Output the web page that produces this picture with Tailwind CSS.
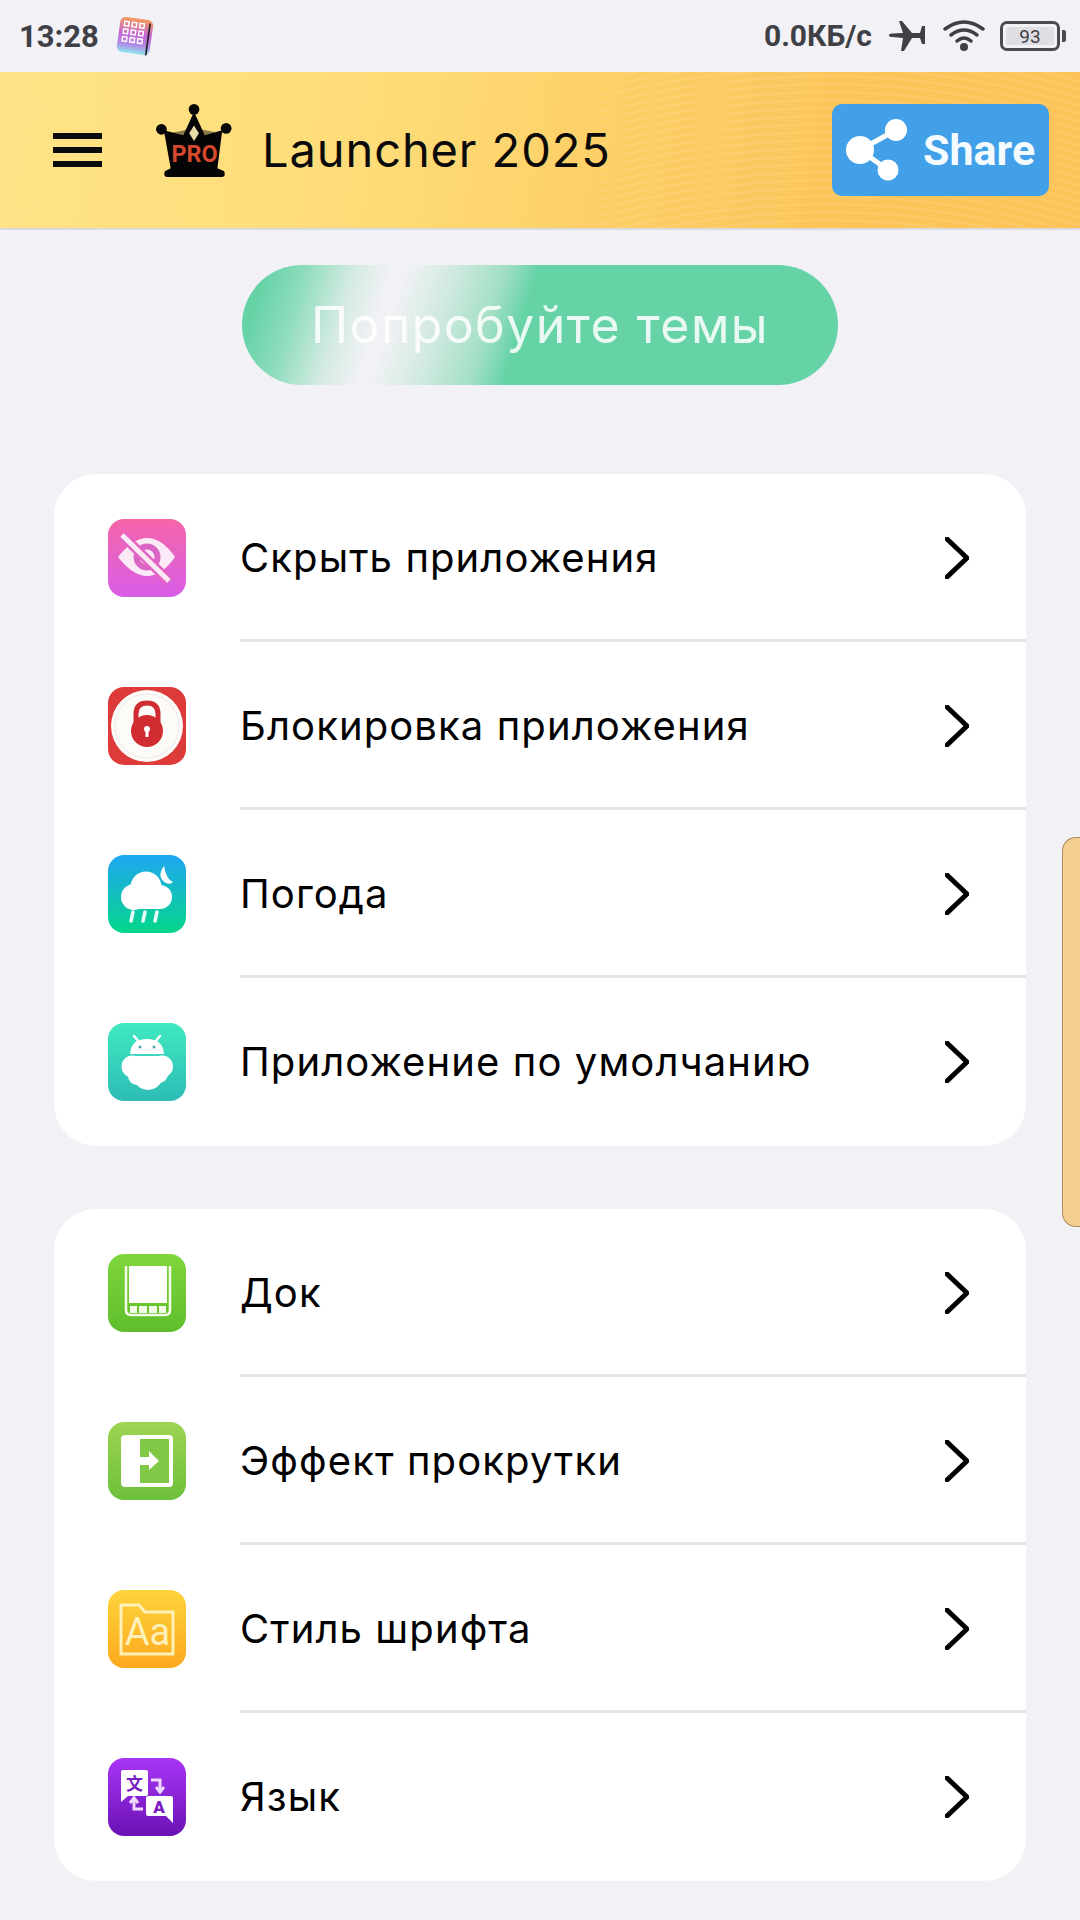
<!DOCTYPE html>
<html lang="ru">
<head>
    <meta charset="UTF-8">
    <meta name="viewport" content="width=device-width, initial-scale=1.0">
    <title>Launcher 2025</title>
    <script src="https://cdn.jsdelivr.net/npm/@tailwindcss/browser@4"></script>
</head>
<body class="relative w-[1080px] h-[1920px] overflow-hidden bg-[#f1f1f6] font-['Roboto',sans-serif]">
    <svg width="0" height="0" class="absolute">
        <defs>
            <symbol id="chevron" viewBox="0 0 24 42"><path d="M2 2 L22 21 L2 40" fill="none" stroke="#000" stroke-width="5" stroke-linecap="round" stroke-linejoin="round"/></symbol>
            <linearGradient id="gPink" x1="0" y1="0" x2="0" y2="1"><stop offset="0" stop-color="#f565a8"/><stop offset="1" stop-color="#d85ee8"/></linearGradient>
            <linearGradient id="gWeather" x1="0" y1="0" x2="0" y2="1"><stop offset="0" stop-color="#20a6f2"/><stop offset="1" stop-color="#04d78a"/></linearGradient>
            <linearGradient id="gAndroid" x1="0" y1="0" x2="0" y2="1"><stop offset="0" stop-color="#40e9c0"/><stop offset="1" stop-color="#2dbcb6"/></linearGradient>
            <linearGradient id="gDock" x1="0" y1="0" x2="0" y2="1"><stop offset="0" stop-color="#80d63c"/><stop offset="1" stop-color="#5fbd2c"/></linearGradient>
            <linearGradient id="gScroll" x1="0" y1="0" x2="0" y2="1"><stop offset="0" stop-color="#9ed452"/><stop offset="1" stop-color="#6cc03a"/></linearGradient>
            <linearGradient id="gFont" x1="0" y1="0" x2="0" y2="1"><stop offset="0" stop-color="#fdd43c"/><stop offset="1" stop-color="#fda81e"/></linearGradient>
            <linearGradient id="gLang" x1="0" y1="0" x2="0" y2="1"><stop offset="0" stop-color="#a935f6"/><stop offset="1" stop-color="#6a12b4"/></linearGradient>
            <linearGradient id="gNotif" x1="0" y1="0" x2="0" y2="1"><stop offset="0" stop-color="#f59a5a"/><stop offset="0.45" stop-color="#c566d8"/><stop offset="0.75" stop-color="#b08ae6"/><stop offset="1" stop-color="#8ee8ee"/></linearGradient>
            <pattern id="hatch" width="7" height="7" patternUnits="userSpaceOnUse" patternTransform="rotate(45)"><path d="M0 0 L0 7" stroke="#fff" stroke-opacity="0.16" stroke-width="1.500"/></pattern>
            <linearGradient id="hatchFade" x1="0" y1="0" x2="1" y2="0"><stop offset="0" stop-color="#fff"/><stop offset="1" stop-color="#000"/></linearGradient>
            <mask id="hatchMask"><rect width="300" height="156" fill="url(#hatchFade)"/></mask>
        </defs>
    </svg>

    <!-- Status bar -->
    <div class="h-[72px] flex items-center justify-between pl-[19px] pr-[14px] text-[#3f4045]">
        <div class="flex items-center gap-[16px]">
            <span class="text-[31px] font-bold leading-none">13:28</span>
            <svg width="40" height="42" viewBox="0 0 36 38">
                <g transform="rotate(8 18 19)">
                    <rect x="3" y="3" width="30" height="32" rx="5" fill="url(#gNotif)"/>
                    <g fill="none" stroke="#fff" stroke-width="1.3">
                        <rect x="7" y="7" width="4" height="4"/><rect x="14" y="7" width="4" height="4"/><rect x="21" y="7" width="4" height="4"/>
                        <rect x="7" y="14" width="4" height="4"/><rect x="14" y="14" width="4" height="4"/><rect x="21" y="14" width="4" height="4"/>
                        <rect x="7" y="21" width="4" height="4"/><rect x="14" y="21" width="4" height="4"/><rect x="21" y="21" width="4" height="4"/>
                    </g>
                    <path d="M30 6 L30 35" stroke="#222" stroke-width="1.5"/>
                </g>
            </svg>
        </div>
        <div class="flex items-center">
            <span class="text-[30px] font-bold leading-none">0.0КБ/с</span>
            <svg class="ml-[17px]" width="36" height="32" viewBox="0 0 36 32">
                <path d="M0 15 Q0 13.500 3 13.500 L14 13 L10 1 L13 1 L23 13 L31 13 L33 6 L36 6 L36 24 L33 24 L31 18 L23 18 L15 31 L12 31 L14 18 L3 17 Q0 17 0 15 Z" fill="#3f4045"/>
            </svg>
            <svg class="ml-[18px]" width="42" height="32" viewBox="0 0 42 32">
                <g fill="none" stroke="#3f4045" stroke-width="3.500" stroke-linecap="round">
                    <path d="M2 9 Q21 -5 40 9"/>
                    <path d="M8 15 Q21 5 34 15"/>
                    <path d="M14 21 Q21 15 28 21"/>
                </g>
                <circle cx="21" cy="27" r="4" fill="#3f4045"/>
            </svg>
            <div class="ml-[15px] w-[60px] h-[30px] border-[3px] border-[#4a4b50] rounded-[7px] p-[3px] flex">
                <div class="flex-1 bg-[#dfdfe3] rounded-[2px] flex items-center justify-center text-[19px] leading-none text-[#3f4045]">93</div>
            </div>
            <div class="ml-[2px] w-[4px] h-[12px] bg-[#4a4b50] rounded-r-[2px]"></div>
        </div>
    </div>

    <!-- Header -->
    <header class="relative h-[158px] border-b-[2px] border-[#dcdce0] overflow-hidden flex items-center justify-between pl-[53px] pr-[31px] bg-[linear-gradient(100deg,#ffe386_0%,#fedc78_35%,#fdd068_55%,#fcc65c_75%,#fcc358_100%)]">
        <svg id="waves" class="absolute inset-0" width="1080" height="156" viewBox="0 0 1080 156" fill="none" stroke="#fff" stroke-opacity="0.14" stroke-width="1.200">
            <rect width="300" height="156" fill="url(#hatch)" stroke="none" mask="url(#hatchMask)"/>
        </svg>
        <div class="relative flex items-center">
            <div class="w-[49px] flex flex-col gap-[8px]">
                <div class="h-[6px] bg-[#0b0b0b]"></div>
                <div class="h-[6px] bg-[#0b0b0b]"></div>
                <div class="h-[6px] bg-[#0b0b0b]"></div>
            </div>
            <svg class="ml-[53px] mt-[-18px]" width="80" height="74" viewBox="0 0 80 76">
                <path d="M14 30 L34 26 L30 36 Z M66 30 L46 26 L50 36 Z" fill="#8b7a48"/>
                <circle cx="39" cy="5.500" r="5.500" fill="#050505"/>
                <circle cx="5.500" cy="26" r="5.500" fill="#050505"/>
                <circle cx="72" cy="25" r="5.500" fill="#050505"/>
                <path d="M39 8 L50 32 L68 27 L63 66 L70 69 Q72 75 67 75 L12 75 Q7 75 9 69 L15 66 L8 27 L28 32 Z" fill="#050505"/>
                <path d="M39 22 L44 30 L39 38 L34 30 Z" fill="#e8dca8"/>
                <text x="39.500" y="60" text-anchor="middle" font-family="Roboto, sans-serif" font-weight="700" font-size="24" fill="#d4492e">PRO</text>
            </svg>
            <span class="ml-[27px] mt-[-2px] text-[47px] leading-none text-[#0a0a0a] tracking-[0.9px] font-['Inter',sans-serif]">Launcher 2025</span>
        </div>
        <div class="relative w-[217px] h-[92px] rounded-[10px] bg-[#42a0e8] flex items-center pl-[13px]">
            <svg width="66" height="66" viewBox="0 0 66 66">
                <path d="M15 33 L51 13 M15 33 L43 53" stroke="#fff" stroke-width="5"/>
                <circle cx="15" cy="33" r="14" fill="#fff"/>
                <circle cx="51" cy="13" r="11" fill="#fff"/>
                <circle cx="43" cy="53" r="10.500" fill="#fff"/>
            </svg>
            <span class="ml-[12px] text-[43px] font-bold leading-none text-[#f4fbff]">Share</span>
        </div>
    </header>

    <main class="flex flex-col items-center">
        <!-- Try themes button -->
        <div class="mt-[35px] w-[596px] h-[120px] rounded-full flex items-center justify-center text-[50px] tracking-[1.4px] leading-none text-white/85 font-['Inter',sans-serif] bg-[linear-gradient(107deg,#66d3a7_0%,#66d3a7_4%,#8cdcbc_10%,#d5ebe2_18%,#f1f1f6_24%,#f1f1f6_26%,#dcede6_31%,#d0e9df_34%,#a0dfc4_42%,#66d3a7_47%,#66d3a7_100%)]">Попробуйте темы</div>

        <!-- First group -->
        <section class="mt-[89px] w-[972px] rounded-[42px] bg-white flex flex-col">
            <div class="h-[168px] flex items-center pl-[54px]">
                <svg width="78" height="78" viewBox="0 0 78 78" class="shrink-0">
                    <rect width="78" height="78" rx="16" fill="url(#gPink)"/>
                    <path d="M10 38 Q25 19 39 19 Q54 19 67 38 Q54 57 39 57 Q25 57 10 38 Z" fill="#fbeaf6"/>
                    <circle cx="39" cy="38" r="10.500" fill="none" stroke="#d965c5" stroke-width="6"/>
                    <path d="M14 16 L61 62" stroke="#e463c2" stroke-width="10"/>
                    <path d="M14 16 L61 62" stroke="#fbeaf6" stroke-width="5"/>
                </svg>
                <div class="ml-[54px] flex-1 h-full flex items-center justify-between border-b-[3px] border-[#e4e4e8] pr-[57px] pt-[3px]">
                    <span class="text-[40px] leading-none tracking-[1.1px] text-black font-['Inter',sans-serif]">Скрыть приложения</span>
                    <svg width="24" height="42"><use href="#chevron"/></svg>
                </div>
            </div>
            <div class="h-[168px] flex items-center pl-[54px]">
                <svg width="78" height="78" viewBox="0 0 78 78" class="shrink-0">
                    <rect width="78" height="78" rx="16" fill="#dd3a3a"/>
                    <circle cx="39" cy="39" r="36" fill="#fdfbf8"/>
                    <circle cx="39" cy="39" r="32" fill="none" stroke="#e9e9ec" stroke-width="1"/>
                    <path d="M28 38 L28 27 Q28 16 39 16 Q50 16 50 27 L50 38" fill="none" stroke="#d02d33" stroke-width="5"/>
                    <circle cx="39" cy="44" r="16" fill="#d02d33"/>
                    <circle cx="39" cy="42" r="3" fill="#fff"/>
                    <rect x="37.500" y="42" width="3" height="8" fill="#fff"/>
                </svg>
                <div class="ml-[54px] flex-1 h-full flex items-center justify-between border-b-[3px] border-[#e4e4e8] pr-[57px] pt-[3px]">
                    <span class="text-[40px] leading-none tracking-[1.1px] text-black font-['Inter',sans-serif]">Блокировка приложения</span>
                    <svg width="24" height="42"><use href="#chevron"/></svg>
                </div>
            </div>
            <div class="h-[168px] flex items-center pl-[54px]">
                <svg width="78" height="78" viewBox="0 0 78 78" class="shrink-0">
                    <rect width="78" height="78" rx="16" fill="url(#gWeather)"/>
                    <path d="M56 11 Q48 22 58 28 Q62 30 65 27 Q58 24 56 11 Z" fill="#fff"/>
                    <g fill="#fff">
                        <circle cx="38" cy="32" r="15.500"/>
                        <circle cx="26" cy="42" r="13"/>
                        <circle cx="52" cy="42" r="12"/>
                        <rect x="26" y="38" width="26" height="16"/>
                    </g>
                    <path d="M25 57 L23 66 M37 57 L35 66 M49 57 L47 66" stroke="#e8fbf5" stroke-width="3.500" stroke-linecap="round"/>
                </svg>
                <div class="ml-[54px] flex-1 h-full flex items-center justify-between border-b-[3px] border-[#e4e4e8] pr-[57px] pt-[3px]">
                    <span class="text-[40px] leading-none tracking-[1.1px] text-black font-['Inter',sans-serif]">Погода</span>
                    <svg width="24" height="42"><use href="#chevron"/></svg>
                </div>
            </div>
            <div class="h-[168px] flex items-center pl-[54px]">
                <svg width="78" height="78" viewBox="0 0 78 78" class="shrink-0">
                    <rect width="78" height="78" rx="16" fill="url(#gAndroid)"/>
                    <path d="M22 31 Q23 16 39 16 Q55 16 56 31 Z" fill="#fff"/>
                    <path d="M26 13 L31 19 M52 13 L47 19" stroke="#fff" stroke-width="2.500" stroke-linecap="round"/>
                    <circle cx="32" cy="24" r="1.500" fill="#4aa"/><circle cx="46" cy="24" r="1.500" fill="#4aa"/>
                    <g fill="#fff">
                        <rect x="24" y="33" width="30" height="14"/>
                        <circle cx="24.500" cy="43.500" r="11"/>
                        <circle cx="54" cy="43.500" r="11"/>
                        <circle cx="40" cy="52" r="15"/>
                        <circle cx="29" cy="53" r="9"/>
                        <circle cx="51" cy="51" r="9"/>
                    </g>
                </svg>
                <div class="ml-[54px] flex-1 h-full flex items-center justify-between pr-[57px]">
                    <span class="text-[40px] leading-none tracking-[1.1px] text-black font-['Inter',sans-serif]">Приложение по умолчанию</span>
                    <svg width="24" height="42"><use href="#chevron"/></svg>
                </div>
            </div>
        </section>

        <!-- Second group -->
        <section class="mt-[63px] w-[972px] rounded-[42px] bg-white flex flex-col">
            <div class="h-[168px] flex items-center pl-[54px]">
                <svg width="78" height="78" viewBox="0 0 78 78" class="shrink-0">
                    <rect width="78" height="78" rx="16" fill="url(#gDock)"/>
                    <path d="M18 12 L18 56 Q18 61 23 61 L57 61 Q62 61 62 56 L62 12" fill="none" stroke="#f3fbe8" stroke-width="2.500"/>
                    <rect x="21" y="12" width="38" height="37" fill="#fff"/>
                    <rect x="22" y="52" width="7" height="7" fill="#f3fbe8"/><rect x="31" y="52" width="8" height="7" fill="#f3fbe8"/><rect x="41" y="52" width="8" height="7" fill="#f3fbe8"/><rect x="51" y="52" width="7" height="7" fill="#f3fbe8"/>
                </svg>
                <div class="ml-[54px] flex-1 h-full flex items-center justify-between border-b-[3px] border-[#e4e4e8] pr-[57px] pt-[3px]">
                    <span class="text-[40px] leading-none tracking-[1.1px] text-black font-['Inter',sans-serif]">Док</span>
                    <svg width="24" height="42"><use href="#chevron"/></svg>
                </div>
            </div>
            <div class="h-[168px] flex items-center pl-[54px]">
                <svg width="78" height="78" viewBox="0 0 78 78" class="shrink-0">
                    <rect width="78" height="78" rx="16" fill="url(#gScroll)"/>
                    <rect x="13" y="13" width="52" height="52" rx="4" fill="#fff"/>
                    <rect x="32" y="17" width="29" height="44" fill="#80c846"/>
                    <path d="M32 35 L41 35 L41 29 L51 39 L41 48 L41 43 L32 43 Z" fill="#fff"/>
                </svg>
                <div class="ml-[54px] flex-1 h-full flex items-center justify-between border-b-[3px] border-[#e4e4e8] pr-[57px] pt-[3px]">
                    <span class="text-[40px] leading-none tracking-[1.1px] text-black font-['Inter',sans-serif]">Эффект прокрутки</span>
                    <svg width="24" height="42"><use href="#chevron"/></svg>
                </div>
            </div>
            <div class="h-[168px] flex items-center pl-[54px]">
                <svg width="78" height="78" viewBox="0 0 78 78" class="shrink-0">
                    <rect width="78" height="78" rx="16" fill="url(#gFont)"/>
                    <path d="M13 15 L31 15 L37 22 L65 22 L65 64 L13 64 Z" fill="none" stroke="#fdf0b8" stroke-width="3"/>
                    <text x="39.500" y="55" text-anchor="middle" font-family="Roboto, sans-serif" font-size="38" fill="#fdf0b8">Aa</text>
                </svg>
                <div class="ml-[54px] flex-1 h-full flex items-center justify-between border-b-[3px] border-[#e4e4e8] pr-[57px] pt-[3px]">
                    <span class="text-[40px] leading-none tracking-[1.1px] text-black font-['Inter',sans-serif]">Стиль шрифта</span>
                    <svg width="24" height="42"><use href="#chevron"/></svg>
                </div>
            </div>
            <div class="h-[168px] flex items-center pl-[54px]">
                <svg width="78" height="78" viewBox="0 0 78 78" class="shrink-0">
                    <rect width="78" height="78" rx="16" fill="url(#gLang)"/>
                    <path d="M13 14 Q13 12 15 12 L38 12 Q40 12 40 14 L40 36 Q40 38 38 38 L20 38 L13 44 Z" fill="#fff"/>
                    <text x="26.500" y="32" text-anchor="middle" font-family="'Noto Sans CJK SC', sans-serif" font-weight="700" font-size="17" fill="#7a20c0">文</text>
                    <path d="M38 40 Q38 38 40 38 L63 38 Q65 38 65 40 L65 65 L58 58 L40 58 Q38 58 38 56 Z" fill="#fff"/>
                    <text x="51" y="55" text-anchor="middle" font-family="Roboto, sans-serif" font-weight="900" font-size="17" fill="#7a20c0">A</text>
                    <g fill="none" stroke="#f0d8ff" stroke-width="3">
                        <path d="M43 22 L52 22 L52 33"/><path d="M48 29 L52 34 L56 29"/>
                        <path d="M35 51 L26 51 L26 41"/><path d="M22 45 L26 40 L30 45"/>
                    </g>
                </svg>
                <div class="ml-[54px] flex-1 h-full flex items-center justify-between pr-[57px]">
                    <span class="text-[40px] leading-none tracking-[1.1px] text-black font-['Inter',sans-serif]">Язык</span>
                    <svg width="24" height="42"><use href="#chevron"/></svg>
                </div>
            </div>
        </section>
    </main>

    <!-- Edge handle -->
    <div class="absolute right-0 top-[837px] w-[18px] h-[390px] bg-[#f5d08e] border border-r-0 border-[#a98a62] rounded-l-[14px]"></div>

    <script>
        // fine wave lines on the right half of the header
        const waves = document.getElementById('waves');
        for (let i = 0; i < 26; i++) {
            const line = document.createElementNS('http://www.w3.org/2000/svg', 'path');
            const y = i * 8 - 30;
            line.setAttribute('d', `M600 ${y + 30} Q850 ${y - 30} 1080 ${y + 40}`);
            waves.appendChild(line);
        }
    </script>
</body>
</html>
